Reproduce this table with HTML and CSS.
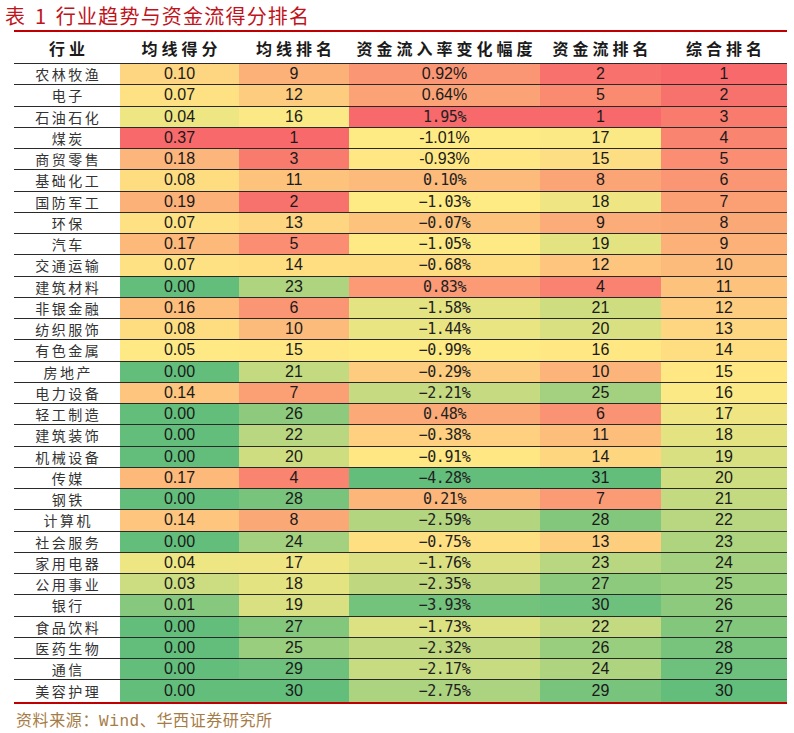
FILE: index.html
```html
<!DOCTYPE html>
<html lang="zh">
<head>
<meta charset="utf-8">
<title>行业趋势与资金流得分排名</title>
<link rel="stylesheet" href="styles.css">
</head>
<body>
<h1 class="title">表 1 行业趋势与资金流得分排名</h1>
<div class="table" id="tbl">
  <div class="row head">
    <div class="h">行业</div><div class="h">均线得分</div><div class="h">均线排名</div><div class="h">资金流入率变化幅度</div><div class="h">资金流排名</div><div class="h">综合排名</div>
  </div>
  <div class="row"><div class="name">农林牧渔</div><div class="c hi">0.10</div><div class="c lo">9</div><div class="c hi">0.92%</div><div class="c lo">2</div><div class="c lo">1</div></div>
  <div class="row"><div class="name">电子</div><div class="c hi">0.07</div><div class="c lo">12</div><div class="c hi">0.64%</div><div class="c lo">5</div><div class="c lo">2</div></div>
  <div class="row"><div class="name">石油石化</div><div class="c hi">0.04</div><div class="c lo">16</div><div class="c hi"><span class="mono">1.95%</span></div><div class="c lo">1</div><div class="c lo">3</div></div>
  <div class="row"><div class="name">煤炭</div><div class="c hi">0.37</div><div class="c lo">1</div><div class="c hi">-1.01%</div><div class="c lo">17</div><div class="c lo">4</div></div>
  <div class="row"><div class="name">商贸零售</div><div class="c hi">0.18</div><div class="c lo">3</div><div class="c hi">-0.93%</div><div class="c lo">15</div><div class="c lo">5</div></div>
  <div class="row"><div class="name">基础化工</div><div class="c hi">0.08</div><div class="c lo">11</div><div class="c hi"><span class="mono">0.10%</span></div><div class="c lo">8</div><div class="c lo">6</div></div>
  <div class="row"><div class="name">国防军工</div><div class="c hi">0.19</div><div class="c lo">2</div><div class="c hi"><span class="mono">−1.03%</span></div><div class="c lo">18</div><div class="c lo">7</div></div>
  <div class="row"><div class="name">环保</div><div class="c hi">0.07</div><div class="c lo">13</div><div class="c hi"><span class="mono">−0.07%</span></div><div class="c lo">9</div><div class="c lo">8</div></div>
  <div class="row"><div class="name">汽车</div><div class="c hi">0.17</div><div class="c lo">5</div><div class="c hi"><span class="mono">−1.05%</span></div><div class="c lo">19</div><div class="c lo">9</div></div>
  <div class="row"><div class="name">交通运输</div><div class="c hi">0.07</div><div class="c lo">14</div><div class="c hi"><span class="mono">−0.68%</span></div><div class="c lo">12</div><div class="c lo">10</div></div>
  <div class="row"><div class="name">建筑材料</div><div class="c hi">0.00</div><div class="c lo">23</div><div class="c hi"><span class="mono">0.83%</span></div><div class="c lo">4</div><div class="c lo">11</div></div>
  <div class="row"><div class="name">非银金融</div><div class="c hi">0.16</div><div class="c lo">6</div><div class="c hi"><span class="mono">−1.58%</span></div><div class="c lo">21</div><div class="c lo">12</div></div>
  <div class="row"><div class="name">纺织服饰</div><div class="c hi">0.08</div><div class="c lo">10</div><div class="c hi"><span class="mono">−1.44%</span></div><div class="c lo">20</div><div class="c lo">13</div></div>
  <div class="row"><div class="name">有色金属</div><div class="c hi">0.05</div><div class="c lo">15</div><div class="c hi"><span class="mono">−0.99%</span></div><div class="c lo">16</div><div class="c lo">14</div></div>
  <div class="row"><div class="name">房地产</div><div class="c hi">0.00</div><div class="c lo">21</div><div class="c hi"><span class="mono">−0.29%</span></div><div class="c lo">10</div><div class="c lo">15</div></div>
  <div class="row"><div class="name">电力设备</div><div class="c hi">0.14</div><div class="c lo">7</div><div class="c hi"><span class="mono">−2.21%</span></div><div class="c lo">25</div><div class="c lo">16</div></div>
  <div class="row"><div class="name">轻工制造</div><div class="c hi">0.00</div><div class="c lo">26</div><div class="c hi"><span class="mono">0.48%</span></div><div class="c lo">6</div><div class="c lo">17</div></div>
  <div class="row"><div class="name">建筑装饰</div><div class="c hi">0.00</div><div class="c lo">22</div><div class="c hi"><span class="mono">−0.38%</span></div><div class="c lo">11</div><div class="c lo">18</div></div>
  <div class="row"><div class="name">机械设备</div><div class="c hi">0.00</div><div class="c lo">20</div><div class="c hi"><span class="mono">−0.91%</span></div><div class="c lo">14</div><div class="c lo">19</div></div>
  <div class="row"><div class="name">传媒</div><div class="c hi">0.17</div><div class="c lo">4</div><div class="c hi"><span class="mono">−4.28%</span></div><div class="c lo">31</div><div class="c lo">20</div></div>
  <div class="row"><div class="name">钢铁</div><div class="c hi">0.00</div><div class="c lo">28</div><div class="c hi"><span class="mono">0.21%</span></div><div class="c lo">7</div><div class="c lo">21</div></div>
  <div class="row"><div class="name">计算机</div><div class="c hi">0.14</div><div class="c lo">8</div><div class="c hi"><span class="mono">−2.59%</span></div><div class="c lo">28</div><div class="c lo">22</div></div>
  <div class="row"><div class="name">社会服务</div><div class="c hi">0.00</div><div class="c lo">24</div><div class="c hi"><span class="mono">−0.75%</span></div><div class="c lo">13</div><div class="c lo">23</div></div>
  <div class="row"><div class="name">家用电器</div><div class="c hi">0.04</div><div class="c lo">17</div><div class="c hi"><span class="mono">−1.76%</span></div><div class="c lo">23</div><div class="c lo">24</div></div>
  <div class="row"><div class="name">公用事业</div><div class="c hi">0.03</div><div class="c lo">18</div><div class="c hi"><span class="mono">−2.35%</span></div><div class="c lo">27</div><div class="c lo">25</div></div>
  <div class="row"><div class="name">银行</div><div class="c hi">0.01</div><div class="c lo">19</div><div class="c hi"><span class="mono">−3.93%</span></div><div class="c lo">30</div><div class="c lo">26</div></div>
  <div class="row"><div class="name">食品饮料</div><div class="c hi">0.00</div><div class="c lo">27</div><div class="c hi"><span class="mono">−1.73%</span></div><div class="c lo">22</div><div class="c lo">27</div></div>
  <div class="row"><div class="name">医药生物</div><div class="c hi">0.00</div><div class="c lo">25</div><div class="c hi"><span class="mono">−2.32%</span></div><div class="c lo">26</div><div class="c lo">28</div></div>
  <div class="row"><div class="name">通信</div><div class="c hi">0.00</div><div class="c lo">29</div><div class="c hi"><span class="mono">−2.17%</span></div><div class="c lo">24</div><div class="c lo">29</div></div>
  <div class="row"><div class="name">美容护理</div><div class="c hi">0.00</div><div class="c lo">30</div><div class="c hi"><span class="mono">−2.75%</span></div><div class="c lo">29</div><div class="c lo">30</div></div>
</div>
<p class="source">资料来源：<span class="lat">Wind</span>、华西证券研究所</p>
<script src="script.js"></script>
</body>
</html>
```
FILE: styles.css
```css
body {
  margin: 0;
  background: #ffffff;
  font-family: "Liberation Sans", "Noto Sans CJK SC", sans-serif;
  color: #1a1a1a;
}

.title {
  margin: 0;
  box-sizing: border-box;
  height: 30px;
  padding: 4px 0 0 5px;
  font: 400 20px/24px "Noto Sans CJK SC", sans-serif;
  letter-spacing: 1.2px;
  word-spacing: 3px;
  color: #c0141c;
  white-space: pre;
}

.table {
  margin-left: 14px;
  width: 773px;
  border-top: 2px solid #c00000;
  border-bottom: 2px solid #c00000;
}

.row {
  display: grid;
  grid-template-columns: 106px 119px 110px 191px 121px 126px;
  box-sizing: border-box;
  height: 21.25px;
  border-bottom: 1px solid #2a2a2a;
}

.row:last-child {
  border-bottom: none;
}

.row.head {
  height: 32px;
}

.h {
  display: flex;
  align-items: center;
  justify-content: center;
  font: 700 16px/20px "Noto Sans CJK SC", sans-serif;
  letter-spacing: 4px;
  text-indent: 4px;
  color: #1a1a1a;
}

.name {
  display: flex;
  align-items: center;
  justify-content: center;
  font: 400 14px/18px "Noto Sans CJK SC", sans-serif;
  letter-spacing: 2.5px;
  text-indent: 2.5px;
  color: #333333;
  background: #ffffff;
}

.c {
  display: flex;
  align-items: center;
  justify-content: center;
  font-size: 16px;
  line-height: 18px;
  color: #1a1a1a;
}

.mono {
  font-family: "DejaVu Sans Mono", monospace;
  font-size: 15px;
  letter-spacing: -0.4px;
  color: #222222;
}

.source {
  margin: 5px 0 0 16px;
  font: 400 16px/20px "Noto Sans CJK SC", sans-serif;
  letter-spacing: 0.6px;
  color: #a57c46;
}

.lat {
  font-family: "Liberation Mono", monospace;
}
```
FILE: script.js
```js
(function () {
  var RED = [248, 105, 107], YEL = [255, 235, 132], GRN = [99, 190, 123];
  function lerp(a, b, t) {
    return [0, 1, 2].map(function (i) { return Math.round(a[i] + (b[i] - a[i]) * t); });
  }
  var rows = document.querySelectorAll('#tbl .row:not(.head)');
  for (var col = 1; col <= 5; col++) {
    var cells = [], vals = [];
    rows.forEach(function (r) {
      var c = r.children[col];
      cells.push(c);
      vals.push(parseFloat(c.textContent.replace('\u2212', '-')));
    });
    var sorted = vals.slice().sort(function (a, b) { return a - b; });
    var n = sorted.length;
    var min = sorted[0], max = sorted[n - 1];
    var mid = n % 2 ? sorted[(n - 1) / 2] : (sorted[n / 2 - 1] + sorted[n / 2]) / 2;
    var highIsRed = cells[0].classList.contains('hi');
    cells.forEach(function (c, i) {
      var v = vals[i], rgb;
      var lowC = highIsRed ? GRN : RED, highC = highIsRed ? RED : GRN;
      if (v <= mid) rgb = lerp(lowC, YEL, mid === min ? 1 : (v - min) / (mid - min));
      else rgb = lerp(YEL, highC, (v - mid) / (max - mid));
      c.style.backgroundColor = 'rgb(' + rgb.join(',') + ')';
    });
  }
})();
```
